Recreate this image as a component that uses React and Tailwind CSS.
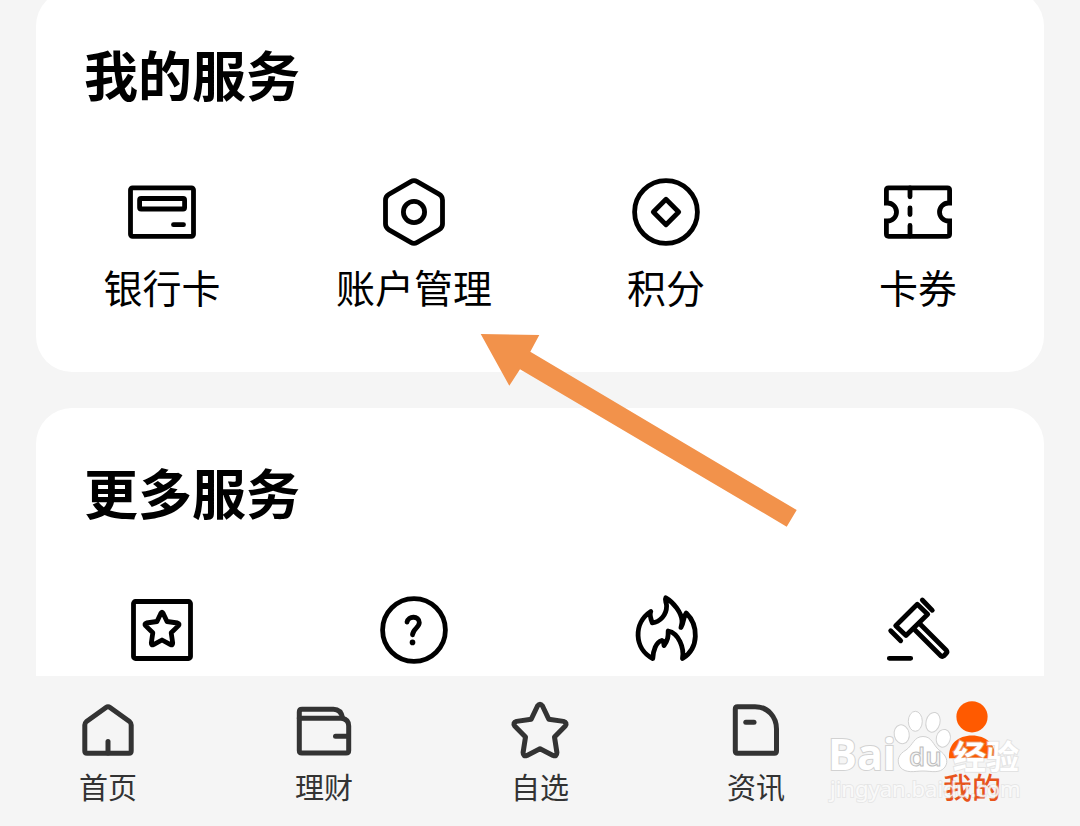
import { useState } from "react";

function ServiceIcon({ children }) {
  return (
    <svg
      viewBox="0 0 72 72"
      className="w-[72px] h-[72px]"
      fill="none"
      stroke="currentColor"
      strokeWidth="4.8"
      strokeLinecap="round"
      aria-hidden="true"
    >
      {children}
    </svg>
  );
}

function NavIcon({ children }) {
  return (
    <svg
      viewBox="0 0 60 60"
      className="w-[60px] h-[60px]"
      fill="none"
      stroke="#333333"
      strokeWidth="5"
      strokeLinecap="round"
      strokeLinejoin="round"
      aria-hidden="true"
    >
      {children}
    </svg>
  );
}

const myServices = [
  {
    label: "银行卡",
    icon: (
      <ServiceIcon>
        <rect x="4.5" y="11.8" width="63" height="48.5" rx="2" />
        <rect x="13.6" y="22.5" width="45" height="10.5" rx="1.5" />
        <path d="M47.5 48.7H57.5" />
      </ServiceIcon>
    ),
  },
  {
    label: "账户管理",
    icon: (
      <ServiceIcon>
        <path d="M32.8 5.6Q36 3.8 39.2 5.6L61 18.2Q64.5 20.3 64.5 24V48Q64.5 51.7 61 53.8L39.2 66.4Q36 68.2 32.8 66.4L11 53.8Q7.5 51.7 7.5 48V24Q7.5 20.3 11 18.2Z" />
        <circle cx="36" cy="36" r="10.6" />
      </ServiceIcon>
    ),
  },
  {
    label: "积分",
    icon: (
      <ServiceIcon>
        <circle cx="36" cy="36" r="31.4" />
        <path d="M36 23.3L48.7 36L36 48.7L23.3 36Z" strokeLinejoin="round" />
      </ServiceIcon>
    ),
  },
  {
    label: "卡券",
    icon: (
      <ServiceIcon>
        <path d="M4.4 27V14Q4.4 11.8 6.6 11.8H65.4Q67.6 11.8 67.6 14V27H66.5A9 9 0 0 0 66.5 45H67.6V58.1Q67.6 60.3 65.4 60.3H6.6Q4.4 60.3 4.4 58.1V45H5.5A9 9 0 0 0 5.5 27Z" />
        <path d="M28 12V20.8M28 32V38.5M28 49.5V60" />
      </ServiceIcon>
    ),
  },
];

const moreServices = [
  {
    name: "收藏",
    icon: (
      <ServiceIcon>
        <rect x="7.5" y="7.5" width="57" height="57" rx="2" />
        <path
          d="M34.8 19.4Q36 17 37.2 19.4L41 27.5L51.5 29Q54 29.8 52.5 31.6L45.2 38.8L46.7 49Q46.7 51.6 44.5 50.6L36 46L27.5 50.6Q25.3 51.6 25.3 49L26.8 38.8L19.5 31.6Q18 29.8 20.5 29L31 27.5Z"
          strokeLinejoin="round"
        />
      </ServiceIcon>
    ),
  },
  {
    name: "帮助",
    icon: (
      <ServiceIcon>
        <circle cx="36" cy="36" r="31.4" />
        <path d="M29 28.2C30 21.5 41.3 21.6 41.3 28.6C41.3 33.6 35 34.6 34.5 40.8" />
        <circle cx="34.5" cy="48.4" r="2.8" fill="currentColor" stroke="none" />
      </ServiceIcon>
    ),
  },
  {
    name: "热点",
    icon: (
      <ServiceIcon>
        <path
          d="M20.8 17.5C19.5 20 20.8 25 22.3 28.8C30 28 36.6 21 36.6 12C36.6 8 34.2 6.500 35.800 3.800C44 8.500 51.500 19 52 26.500C52.200 29 51.500 31 51 33.500C54 29 53 23 56.200 19C68.500 31 69.500 54 52.500 64.500C54.500 54 48.500 39 38.200 37C38.200 43 38 46 34 51.500C34 49 34 47.500 31.800 46.500C26 48 23 57 22.800 64.500C4 55 3 29 20.800 17.500Z"
          strokeLinejoin="round"
        />
      </ServiceIcon>
    ),
  },
  {
    name: "拍卖",
    icon: (
      <ServiceIcon>
        <path
          d="M35.3 10.3L45.7 20.3L24 41.5L13.7 31.7Z"
          strokeLinejoin="round"
        />
        <path d="M40.3 6L50.3 16.3M8.7 36.7L18.7 46.7M7.3 64.3H28.7" />
        <path
          d="M38.5 30.5L64.5 56.5Q65.5 58 64.5 59L61.7 62Q60.5 63 59 62L33 36"
          strokeLinejoin="round"
        />
      </ServiceIcon>
    ),
  },
];

const tabs = [
  {
    label: "首页",
    icon: (
      <NavIcon>
        <path d="M28 6.5Q30 5 32 6.5L51.5 20.5Q53.2 22 53.2 24V50Q53.2 52.2 51 52.2H9Q6.8 52.2 6.8 50V24Q6.8 22 8.5 20.5Z" />
        <path d="M30 40.5V52" />
      </NavIcon>
    ),
  },
  {
    label: "理财",
    icon: (
      <NavIcon>
        <path d="M5.3 17.3V11Q5.3 8.3 8 8.3H39.5Q47 8.3 48.7 17.3" />
        <path d="M5.3 17.3H48Q54.7 18.5 54.7 25V49.5Q54.7 52 52.2 52H7.8Q5.3 52 5.3 49.5Z" />
        <path d="M41.5 35.3H54.5" />
      </NavIcon>
    ),
  },
  {
    label: "自选",
    icon: (
      <NavIcon>
        <path d="M27.5 5Q30 1.5 32.5 5L38.8 18.3L53.5 20.4Q57.5 21.5 55.3 25L44.5 36L46.9 51.5Q46.9 56 43 54.4L30 47.8L17 54.4Q13.1 56 13.1 51.5L15.5 36L4.7 25Q2.5 21.5 6.5 20.4L21.2 18.3Z" />
      </NavIcon>
    ),
  },
  {
    label: "资讯",
    icon: (
      <NavIcon>
        <path d="M11.5 5.7H29C42 5.7 50.5 16 50.5 28V50Q50.5 52.2 48.3 52.2H11.5Q9.3 52.2 9.3 50V8Q9.3 5.7 11.5 5.7Z" />
        <path d="M19.8 21.3H28" />
      </NavIcon>
    ),
  },
  {
    label: "我的",
    icon: (
      <NavIcon>
        <circle cx="30" cy="15.8" r="15.6" fill="#ff5a00" stroke="none" />
        <path
          d="M7 57.3C6 43 16 34.5 30 34.5S54 43 53 57.3Z"
          fill="#ff5a00"
          stroke="none"
        />
      </NavIcon>
    ),
  },
];

function ServiceCard({ title, items }) {
  return (
    <section className="rounded-[36px] bg-white pt-[58px] pb-[57px]">
      <h2 className="pl-12 text-[54px] leading-[60px] font-bold">{title}</h2>
      <div className="mt-[68px] grid grid-cols-4">
        {items.map((item) => (
          <button
            key={item.label || item.name}
            type="button"
            aria-label={item.name}
            className="flex flex-col items-center gap-[17px]"
          >
            {item.icon}
            <span className="h-[50px] text-[39px] leading-[50px]">
              {item.label}
            </span>
          </button>
        ))}
      </div>
    </section>
  );
}

function Arrow() {
  return (
    <svg
      viewBox="0 0 318 194"
      className="pointer-events-none absolute left-[480px] top-[344px] w-[318px] h-[194px]"
      aria-hidden="true"
    >
      <path
        d="M.7 0L59.3 1L50.3 17.7L316.7 176L306.7 192.7L40 35.3L29.3 51.7Z"
        fill="#f2924b"
      />
    </svg>
  );
}

function Watermark() {
  return (
    <svg
      viewBox="0 0 210 110"
      className="pointer-events-none absolute right-12 bottom-4 w-[210px] h-[110px]"
      fill="#ffffff"
      stroke="#d2d2d2"
      strokeWidth="1"
      aria-hidden="true"
    >
      <g fontFamily='"Open Sans", "Noto Sans CJK SC", sans-serif'>
        <text
          x="6"
          y="70"
          fontSize="43"
          fontWeight="700"
          strokeWidth="2"
          paintOrder="stroke"
        >
          Bai
        </text>
        <ellipse cx="79.7" cy="34.3" rx="7.5" ry="9.5" transform="rotate(-12 79.7 34.3)" />
        <ellipse cx="93.3" cy="21.3" rx="7" ry="10" />
        <ellipse cx="111" cy="22.3" rx="7" ry="10" transform="rotate(14 111 22.3)" />
        <ellipse cx="121.3" cy="38.3" rx="7" ry="9" transform="rotate(14 121.3 38.3)" />
        <path d="M101 36.5C110 36.5 111 45 117 50C124 55 127 61 123 67C118 74 109 71 101 71S84 74 78 67C74 60 77 54 84 50C91 45 92 36.5 101 36.5Z" />
        <text x="87" y="66" fontSize="26" fontWeight="600" fill="#f5f5f5" stroke="#bdbdbd">
          du
        </text>
        <text
          x="131"
          y="69"
          fontSize="33"
          fontWeight="700"
          strokeWidth="2"
          strokeOpacity="0.5"
          paintOrder="stroke"
        >
          经验
        </text>
      </g>
      <text
        x="8"
        y="97"
        fontFamily='"Noto Sans", sans-serif'
        fontSize="22"
        strokeWidth="2"
        strokeOpacity="0.4"
        fillOpacity="0.8"
        paintOrder="stroke"
      >
        jingyan.baidu.com
      </text>
    </svg>
  );
}

function App() {
  const [active, setActive] = useState("我的");

  return (
    <div className="flex h-screen flex-col overflow-hidden bg-[#f5f5f5] font-['Liberation_Sans','Noto_Sans_CJK_SC',sans-serif] text-black">
      <main className="min-h-0 flex-1 overflow-hidden">
        <div className="relative -mt-[10px] flex flex-col gap-9 px-9">
          <ServiceCard title="我的服务" items={myServices} />
          <ServiceCard title="更多服务" items={moreServices} />
          <Arrow />
        </div>
      </main>

      <nav className="relative grid grid-cols-5 bg-[#f5f5f5] pt-[25px] pb-[19px]">
        {tabs.map((tab) => (
          <button
            key={tab.label}
            type="button"
            onClick={() => setActive(tab.label)}
            className="flex flex-col items-center gap-[10px]"
          >
            {tab.icon}
            <span
              className={
                active === tab.label
                  ? "text-[29px] leading-9 font-medium text-[#e8541c]"
                  : "text-[29px] leading-9 text-[#333333]"
              }
            >
              {tab.label}
            </span>
          </button>
        ))}
        <Watermark />
      </nav>
    </div>
  );
}

export default App;
